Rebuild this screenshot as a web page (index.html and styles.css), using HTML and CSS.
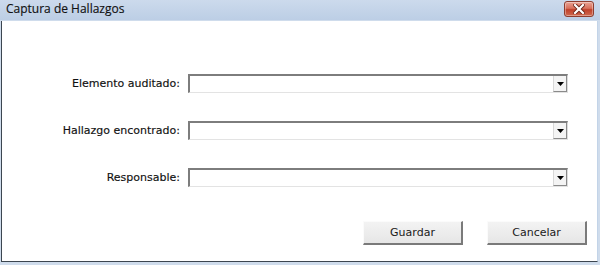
FILE: index.html
```html
<!DOCTYPE html>
<html>
<head>
<meta charset="utf-8">
<link rel="stylesheet" href="styles.css">
</head>
<body>
<div class="window">
  <div class="titlebar">
    <span class="title">Captura de Hallazgos</span>
    <span class="close">
      <svg width="12" height="10" viewBox="0 0 12 10">
        <path d="M2 1 L10 9 M10 1 L2 9" stroke="#6b2418" stroke-width="4" stroke-linecap="square"/>
        <path d="M2 1 L10 9 M10 1 L2 9" stroke="#ffffff" stroke-width="2.2" stroke-linecap="square"/>
      </svg>
    </span>
  </div>
  <div class="client">
    <div class="form">
      <label class="lbl">Elemento auditado:</label>
      <div class="combo"><span class="field"></span><span class="drop"><svg width="7" height="4" viewBox="0 0 7 4"><path d="M0 0 H7 L3.5 4 Z" fill="#000"/></svg></span></div>
      <label class="lbl">Hallazgo encontrado:</label>
      <div class="combo"><span class="field"></span><span class="drop"><svg width="7" height="4" viewBox="0 0 7 4"><path d="M0 0 H7 L3.5 4 Z" fill="#000"/></svg></span></div>
      <label class="lbl">Responsable:</label>
      <div class="combo"><span class="field"></span><span class="drop"><svg width="7" height="4" viewBox="0 0 7 4"><path d="M0 0 H7 L3.5 4 Z" fill="#000"/></svg></span></div>
    </div>
    <div class="buttons">
      <button class="btn">Guardar</button>
      <button class="btn">Cancelar</button>
    </div>
  </div>
</div>
</body>
</html>
```
FILE: styles.css
```css
html, body { margin: 0; padding: 0; }
body { width: 600px; height: 265px; overflow: hidden; background: #dbe6f3; }
.window {
  width: 600px; height: 265px; box-sizing: border-box;
  display: flex; flex-direction: column;
  background: #cfdcec;
  font-family: "DejaVu Sans", Verdana, sans-serif;
}
.titlebar {
  height: 20px; flex: none;
  display: flex; align-items: flex-start;
  background: linear-gradient(#ccdaec, #bccee5);
  padding: 0 6px 0 6px;
}
.title {
  font-family: "Open Sans", "Noto Sans", sans-serif;
  font-size: 12px; color: #111; line-height: 18px; margin-top: 0;
  -webkit-text-stroke: 0.15px #111;
}
.close {
  margin-left: auto; margin-top: 1px;
  width: 28px; height: 14px;
  border: 1px solid #8e3d2f; border-radius: 3px;
  background: linear-gradient(#e9a394 0%, #d8705c 45%, #c0402a 55%, #cf6a50 100%);
  display: flex; align-items: center; justify-content: center;
  box-shadow: inset 0 0 0 1px rgba(255,255,255,0.35);
}
.close svg { display: block; }
.client {
  flex: 1;
  background: #ffffff;
  margin: 1px 2px 3px 1px;
  border-left: 1px solid #3c4650;
  border-bottom: 1px solid #3c4650;
  border-right: 1px solid #c3d4e8;
  display: flex; flex-direction: column;
}
.form {
  display: grid;
  grid-template-columns: 178px 380px;
  column-gap: 8px;
  row-gap: 28px;
  grid-auto-rows: 19px;
  margin-top: 53px;
}
.lbl {
  font-size: 11px; color: #111;
  text-align: right; align-self: center;
  line-height: 19px;
  -webkit-text-stroke: 0.15px #111;
}
.combo {
  display: flex;
  box-sizing: border-box;
  border-top: 2px solid #7d7d7d;
  border-left: 2px solid #7d7d7d;
  border-right: 1px solid #dcdcdc;
  border-bottom: 1px solid #e3e3e3;
  background: #fff;
}
.field { flex: 1; }
.drop {
  width: 14px; box-sizing: border-box;
  border-left: 1px solid #d8d8d8;
  border-bottom: 1px solid #8a8a8a;
  border-right: 1px solid #8a8a8a;
  display: flex; align-items: center; justify-content: center;
  background: #f4f4f4;
}
.drop svg { display: block; }
.buttons {
  display: flex; gap: 24px;
  margin-top: 34px;
  margin-left: 361px;
}
.btn {
  width: 100px; height: 24px; box-sizing: border-box;
  font-family: "DejaVu Sans", Verdana, sans-serif;
  font-size: 11px; color: #1a1a1a;
  background: linear-gradient(#f3f3f3, #e6e6e6);
  border-top: 1px solid #fbfbfb;
  border-left: 1px solid #fbfbfb;
  border-right: 2px solid #7a7a7a;
  border-bottom: 2px solid #7a7a7a;
  padding: 0;
}
```
